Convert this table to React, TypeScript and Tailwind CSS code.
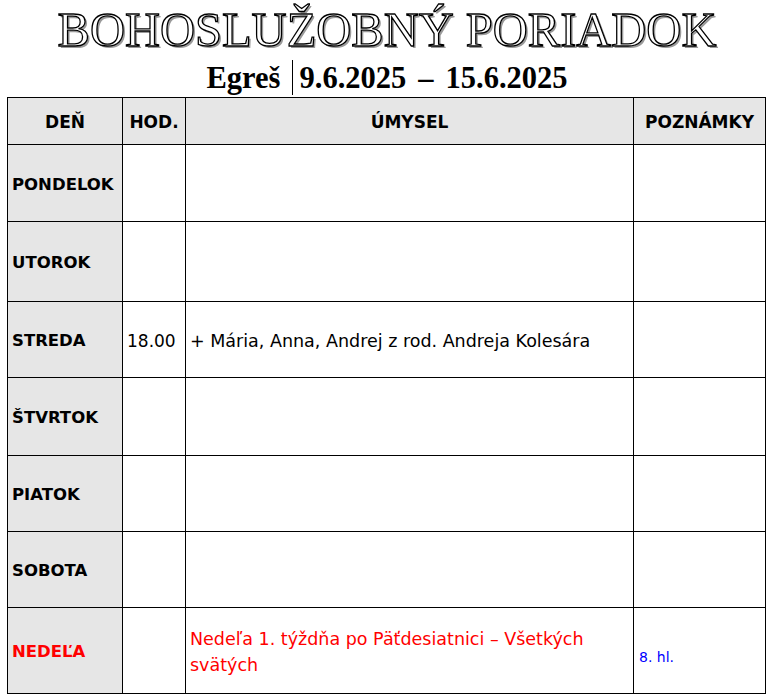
import React from "react";

const body = "font-['DejaVu_Sans',sans-serif]";

type Row = {
  day: string;
  time?: string;
  intent?: React.ReactNode;
  note?: React.ReactNode;
  red?: boolean;
};

const rows: Row[] = [
  { day: "PONDELOK" },
  { day: "UTOROK" },
  { day: "STREDA", time: "18.00", intent: "+ Mária, Anna, Andrej z rod. Andreja Kolesára" },
  { day: "ŠTVRTOK" },
  { day: "PIATOK" },
  { day: "SOBOTA" },
  {
    day: "NEDEĽA",
    red: true,
    intent: (
      <span className="text-[#ff0000] leading-[26px] block">
        Nedeľa 1. týždňa po Päťdesiatnici – Všetkých
        <br />
        svätých
      </span>
    ),
    note: <span className="text-[#0000ff] text-[14px] block pt-[10px]">8. hl.</span>,
  },
];

export default function App() {
  return (
    <div className="w-[774px] h-[700px] bg-white overflow-hidden">
      <div className="h-[97px] flex flex-col items-center">
        <div className="pt-[6px] h-[54px] font-['Liberation_Serif',serif] text-[48.5px] leading-none text-white [-webkit-text-stroke:1.3px_#000] [text-shadow:2px_2px_0_#9a9a9a]">
          BOHOSLUŽOBNÝ PORIADOK
        </div>
        <div className="flex-1 flex items-end font-['Liberation_Serif',serif] font-bold text-[30.5px] leading-none text-black">
          <span className="pb-[4px] mr-[11px]">Egreš</span>
          <span className="w-px h-[35px] bg-black mb-[2px]" />
          <span className="pb-[4px] ml-[7px]">
            9.6.2025<span className="mx-[12px]">–</span>15.6.2025
          </span>
        </div>
      </div>
      <div
        className={`ml-[7px] w-[759px] grid grid-cols-[114px_62px_447px_131px] grid-rows-[46px_76px_79px_75px_77px_75px_75px_85px] gap-px bg-black p-px ${body} text-black`}
      >
        <div className="bg-[#e6e6e6] flex items-center justify-center pt-[4px] font-bold text-[17px]">DEŇ</div>
        <div className="bg-[#e6e6e6] flex items-center justify-center pt-[4px] font-bold text-[17px]">HOD.</div>
        <div className="bg-[#e6e6e6] flex items-center justify-center pt-[4px] font-bold text-[17px]">ÚMYSEL</div>
        <div className="bg-[#e6e6e6] flex items-center justify-center pt-[4px] font-bold text-[17px]">POZNÁMKY</div>
        {rows.map((r) => (
          <React.Fragment key={r.day}>
            <div
              className={`bg-[#e6e6e6] flex items-center pl-[4px] pt-[4px] font-bold text-[16.5px] ${r.red ? "text-[#ff0000]" : "text-black"}`}
            >
              {r.day}
            </div>
            <div className="bg-white flex items-center pl-[4px] pt-[4px] text-[17px]">{r.time}</div>
            <div className="bg-white flex items-center pl-[4px] pt-[3px] text-[17.5px]">{r.intent}</div>
            <div className="bg-white flex items-center pl-[5px] pt-[4px]">{r.note}</div>
          </React.Fragment>
        ))}
      </div>
    </div>
  );
}
